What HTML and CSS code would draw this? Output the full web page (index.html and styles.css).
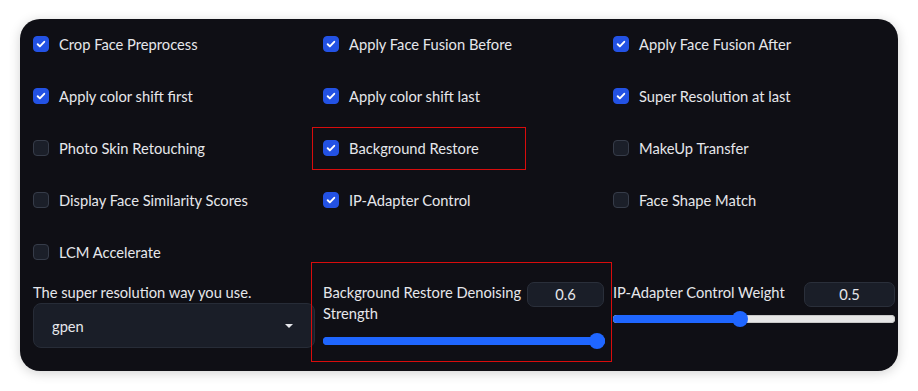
FILE: index.html
```html
<!DOCTYPE html>
<html lang="en">

<head>
  <meta charset="UTF-8" />
  <meta name="viewport" content="width=device-width, initial-scale=1.0" />
  <title>Face Options</title>
  <link rel="stylesheet" href="styles.css">
</head>

<body>
  <div class="panel">
    <div class="checks">
      <label class="check on"><span class="box"></span>Crop Face Preprocess</label>
      <label class="check on"><span class="box"></span>Apply Face Fusion Before</label>
      <label class="check on"><span class="box"></span>Apply Face Fusion After</label>

      <label class="check on"><span class="box"></span>Apply color shift first</label>
      <label class="check on"><span class="box"></span>Apply color shift last</label>
      <label class="check on"><span class="box"></span>Super Resolution at last</label>

      <label class="check"><span class="box"></span>Photo Skin Retouching</label>
      <label class="check on"><span class="box"></span>Background Restore</label>
      <label class="check"><span class="box"></span>MakeUp Transfer</label>

      <label class="check"><span class="box"></span>Display Face Similarity Scores</label>
      <label class="check on"><span class="box"></span>IP-Adapter Control</label>
      <label class="check"><span class="box"></span>Face Shape Match</label>

      <label class="check"><span class="box"></span>LCM Accelerate</label>
    </div>

    <div class="controls">
      <div class="field">
        <div class="field-label">The super resolution way you use.</div>
        <div class="select">
          <span>gpen</span>
          <span class="caret"></span>
        </div>
      </div>

      <div class="field">
        <div class="slider-head">
          <div class="field-label">Background Restore Denoising Strength</div>
          <div class="num num-sm">0.6</div>
        </div>
        <div class="slider">
          <div class="fill" style="width: 100%;"></div>
          <div class="thumb" style="left: 100%;"></div>
        </div>
      </div>

      <div class="field">
        <div class="slider-head">
          <div class="field-label">IP-Adapter Control Weight</div>
          <div class="num">0.5</div>
        </div>
        <div class="slider slider-light">
          <div class="fill" style="width: 45%;"></div>
          <div class="thumb" style="left: 45%;"></div>
        </div>
      </div>
    </div>

    <!-- annotation boxes -->
    <div class="mark mark-restore"></div>
    <div class="mark mark-denoise"></div>
  </div>
</body>

</html>
```

FILE: styles.css
```css
body {
  font-family: Lato, "Noto Sans", sans-serif;
  margin: 0;
  padding: 19px 20px 20px;
  background-color: #ffffff;
  color: #e6e7eb;
}

.panel {
  position: relative;
  width: 878px;
  height: 352px;
  box-sizing: border-box;
  padding: 15px 3px 0 13px;
  background: #0f0f15;
  border-radius: 20px;
  box-shadow: 0 2px 12px rgba(0, 0, 0, 0.18);
}

.checks {
  display: grid;
  grid-template-columns: repeat(3, 282px);
  column-gap: 8px;
  row-gap: 32px;
}

.check {
  display: flex;
  align-items: center;
  height: 20px;
  font-size: 14.7px;
  line-height: 20px;
}

.box {
  width: 16px;
  height: 16px;
  box-sizing: border-box;
  margin-right: 10px;
  border-radius: 4px;
  background: #1b1f29;
  border: 1px solid #363c49;
}

.check.on .box {
  background: #2352e4;
  border-color: #2352e4;
  background-image: url("data:image/svg+xml,%3Csvg xmlns='http://www.w3.org/2000/svg' viewBox='0 0 16 16'%3E%3Cpath d='M4.2 8.3l2.5 2.4 5-5.2' fill='none' stroke='white' stroke-width='2.2' stroke-linecap='round' stroke-linejoin='round'/%3E%3C/svg%3E");
}

.controls {
  display: grid;
  grid-template-columns: repeat(3, 282px);
  column-gap: 8px;
  margin-top: 20px;
}

.field-label {
  font-size: 14.7px;
  line-height: 21px;
}

.select {
  display: flex;
  align-items: center;
  justify-content: space-between;
  height: 45px;
  padding: 0 21px 0 18px;
  box-sizing: border-box;
  background: #1a1e28;
  border: 1px solid #272c37;
  border-radius: 8px;
  font-size: 14.7px;
}

.caret {
  width: 0;
  height: 0;
  border-left: 4px solid transparent;
  border-right: 4px solid transparent;
  border-top: 4px solid #e6e7eb;
}

.slider-head {
  display: flex;
  justify-content: space-between;
  align-items: flex-start;
}

.slider-head .field-label {
  flex: 1;
}

.num {
  width: 91px;
  height: 25px;
  box-sizing: border-box;
  margin-left: 8px;
  background: #1a1e28;
  border: 1px solid #2a2f3a;
  border-radius: 7px;
  text-align: center;
  font-size: 14.7px;
  line-height: 23px;
}

.num-sm {
  width: 77px;
  margin-left: 4px;
  margin-right: 1px;
}

.slider {
  position: relative;
  height: 8px;
  margin: 13px 0 0;
  border-radius: 4px;
  background: #2563ff;
}

.slider-light {
  margin-top: 8px;
  background: #e6e6e6;
  box-shadow: inset 0 0 0 1px #c8c8c8;
}

.fill {
  height: 100%;
  border-radius: 4px;
  background: #1f66ff;
}

.thumb {
  position: absolute;
  top: -4px;
  width: 16px;
  height: 16px;
  margin-left: -16px;
  border-radius: 50%;
  background: #1f66ff;
}

.slider-light .thumb {
  margin-left: -8px;
}

.mark {
  position: absolute;
  border: 1px solid #d80c0c;
}

.mark-restore {
  left: 292px;
  top: 108px;
  width: 212px;
  height: 41px;
}

.mark-denoise {
  left: 291px;
  top: 243px;
  width: 299px;
  height: 98px;
}
```
